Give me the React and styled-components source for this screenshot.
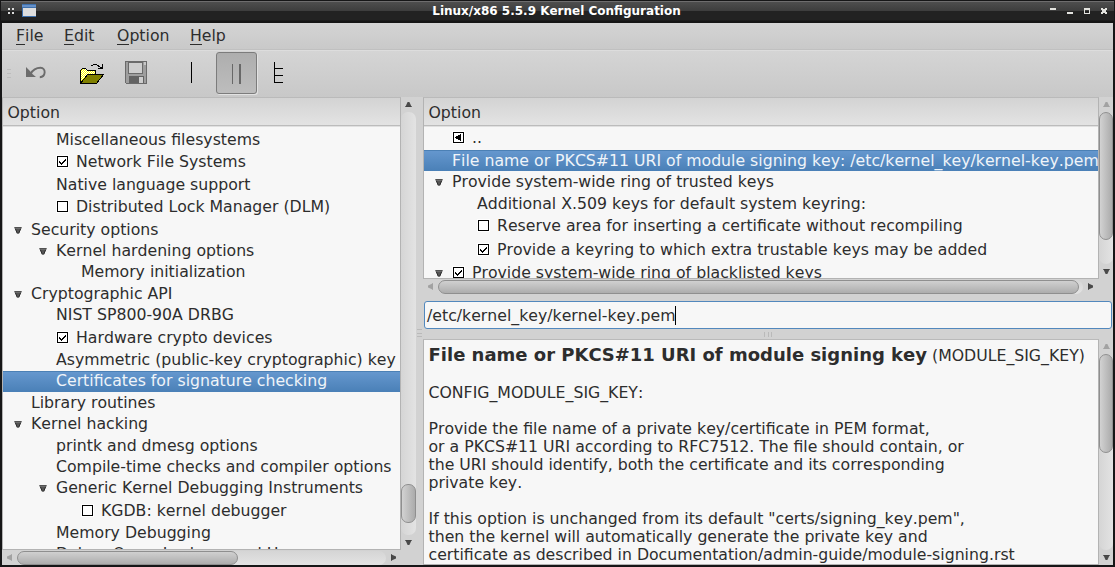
import React from "react";
import styled, { createGlobalStyle } from "styled-components";

const GlobalStyle = createGlobalStyle`
  * { box-sizing: border-box; }
  body {
    margin: 0;
    overflow: hidden;
    font-family: "DejaVu Sans", sans-serif;
    font-size: 15.72px;
    font-kerning: none;
    color: #2d2d2d;
  }
`;

const Window = styled.div`
  width: 1115px;
  height: 567px;
  background: #161617;
  display: flex;
  flex-direction: column;
  padding: 1px 2px 2px;
`;

const TitleBar = styled.header`
  height: 22px;
  display: grid;
  grid-template-columns: 1fr auto 1fr;
  align-items: start;
  border-top: 1px solid #6e6d6e;
  margin: 0 -1px;
  background: linear-gradient(#4e4e4e 0, #3d3d3d 9px, #222 9px, #222 18px, #151515 19px);
`;

const TitleSide = styled.div`
  display: flex;
  justify-content: ${(p) => (p.$end ? "flex-end" : "flex-start")};
`;

const Title = styled.h1`
  margin: 0 2px 0 0;
  font-size: 12px;
  line-height: 18px;
  font-weight: bold;
  color: #fff;
  white-space: pre;
`;

const Body = styled.main`
  flex: 1;
  min-height: 0;
  display: flex;
  flex-direction: column;
  background: #d2d2d2;
`;

const MenuBar = styled.nav`
  height: 26px;
  display: flex;
  gap: 22px;
  padding: 0 14px;
  line-height: 26px;
  background: linear-gradient(#d4d4d4, #c9c9c9);
`;

const MenuItem = styled.span`
  width: ${(p) => p.$w}px;
  white-space: pre;
`;

const Mnemonic = styled.span`
  display: inline-block;
  height: 18px;
  line-height: 18px;
  border-bottom: 1px solid #2d2d2d;
`;

const ToolBar = styled.div`
  height: 48px;
  display: flex;
  border-top: 1px solid #c0c0c0;
  box-shadow: inset 0 1px #dddddd;
  background: linear-gradient(#d5d5d5, #c8c8c8);
`;

const Split = styled.div`
  flex: 1;
  min-height: 0;
  display: flex;
`;

const LeftPane = styled.section`
  width: 414px;
  display: flex;
  flex-direction: column;
`;

const RightPane = styled.section`
  width: 690px;
  display: flex;
  flex-direction: column;
`;

const VSplitter = styled.div`
  width: 7px;
  display: flex;
  align-items: center;
  padding-top: 4px;
`;

const HSplitter = styled.div`
  height: 8px;
  display: flex;
  justify-content: center;
`;

const ScrollArea = styled.div`
  display: flex;
  min-height: 0;
  height: ${(p) => p.$h}px;
`;

const View = styled.div`
  flex: 1;
  min-width: 0;
  overflow: hidden;
  background: #f7f7f7;
  border: 1px solid #b3b3b3;
  border-top-color: #bababa;
`;

const ColumnHeader = styled.div`
  height: 28px;
  padding: 2px 0 0 4.5px;
  line-height: 26px;
  border-bottom: 1px solid #bcbcbc;
  box-shadow: 0 1px #e0e0e0;
  background: linear-gradient(#d3d3d3, #e3e3e3);
`;

const Tree = styled.div`
  padding-top: ${(p) => p.$top}px;
`;

const Row = styled.div`
  height: ${(p) => p.$h}px;
  display: flex;
  align-items: center;
  white-space: pre;
  padding-left: ${(p) => 10 + p.$level * 25}px;
  color: ${(p) => (p.$selected ? "#eff4f9" : "inherit")};
  background: ${(p) => (p.$selected ? "linear-gradient(#6698cf, #4a80b7)" : "none")};
  box-shadow: ${(p) => (p.$selected ? "inset 0 1px #4b80b5" : "none")};
`;

const Label = styled.span`
  align-self: flex-start;
  line-height: ${(p) => p.$lh}px;
`;

const ArrowSlot = styled.span`
  width: 18px;
  flex: none;
  display: flex;
  padding-left: 1px;
`;

const BoxSlot = styled.span`
  width: 20px;
  flex: none;
  display: flex;
  padding-bottom: 2px;
`;

const VBar = styled.div`
  width: ${(p) => p.$w}px;
  display: flex;
  flex-direction: column;
`;

const HBar = styled.div`
  height: 15px;
  display: flex;
  align-items: center;
`;

const Btn = styled.div`
  width: 15px;
  height: 15px;
  flex: none;
  display: flex;
  align-items: center;
  justify-content: center;
`;

const VTrough = styled.div`
  flex: 1;
  border-radius: 7px;
  background: linear-gradient(90deg, #d5d5d5, #e3e3e3);
  padding-top: ${(p) => p.$offset}px;
`;

const HTrough = styled.div`
  flex: 1;
  height: 14px;
  border-radius: 7px;
  background: linear-gradient(#d5d5d5, #e3e3e3);
`;

const VThumb = styled.div`
  height: ${(p) => p.$len}px;
  border: 1px solid #8f8f8f;
  border-radius: 7px;
  background: linear-gradient(90deg, #d2d2d2, #ababab);
`;

const HThumb = styled.div`
  width: ${(p) => p.$len}px;
  height: 14px;
  border: 1px solid #8f8f8f;
  border-radius: 7px;
  background: linear-gradient(#d0d0d0, #adadad);
`;

const ValueInput = styled.div`
  height: 28px;
  margin: 7px 1px 2px 1px;
  padding: 1px 0 0 2px;
  line-height: 25px;
  display: flex;
  align-items: center;
  white-space: pre;
  background: #f7f7f7;
  border: 1px solid #5288bd;
  border-radius: 3px;
`;

const Caret = styled.span`
  width: 1px;
  height: 19px;
  background: #000;
`;

const HelpText = styled.div`
  padding: 3px 4.5px 0;
  line-height: 18px;
  white-space: pre;
`;

const HelpTitle = styled.h2`
  margin: 0 0 16px;
  font-size: 15.72px;
  font-weight: normal;
  line-height: 24px;
  b { font-size: 18px; }
`;

const Icon = styled.svg`
  flex: none;
  display: block;
`;

const ToolIcon = styled(Icon)`
  margin-left: ${(p) => p.$ml}px;
`;

const ToggleButton = styled.div`
  width: 41px;
  height: 42px;
  margin: 2px 0 0 21px;
  border: 1px solid #7c7c7c;
  border-radius: 3px;
  background: linear-gradient(#aeaeae, #bdbdbd);
  box-shadow: 1px 1px #e2e2e2;
  display: flex;
`;

function Arrow({ dir, dim }) {
  const rot = { down: 0, up: 180, left: 90, right: 270 }[dir];
  return (
    <Icon width="7" height="7" viewBox="0 0 7 7">
      <g transform={`rotate(${rot} 3.5 3.5)`}>
        <path d="M0.6 1.5H6.4L4.4 6H2.6Z" fill={dim ? "#a2a2a2" : "#4a4a4a"} />
        <path d="M0.3 1.5H6.7" stroke={dim ? "#a2a2a2" : "#444"} />
      </g>
    </Icon>
  );
}

function Expander() {
  return (
    <Icon width="8" height="7" viewBox="0 0 8 7">
      <path d="M1 1.2H7L5 6.5H3Z" fill="#555" />
      <path d="M0.3 0.7H7.7M1.2 1.5L3.3 6.4M6.8 1.5L4.7 6.4" stroke="#2c2c2c" fill="none" />
    </Icon>
  );
}

function Box({ kind }) {
  return (
    <Icon width="13" height="13" viewBox="0 0 13 13" shapeRendering="crispEdges">
      <path d="M0 0H13V13H0Z" fill="#fff" />
      <path d="M1.5 1.5H11.5V11.5H1.5Z" fill="#fff" stroke="#000" />
      {kind === "on" && (
        <path
          d="M3 6h1v2h-1zM4 7h1v2h-1zM5 8h1v2h-1zM6 7h1v2h-1zM7 6h1v2h-1zM8 5h1v2h-1zM9 4h1v2h-1z"
          fill="#000"
        />
      )}
      {kind === "back" && <path d="M3 6h1v1h-1zM4 5h2v3h-2zM6 4h2v5h-2zM8 3h1v7h-1z" fill="#000" />}
    </Icon>
  );
}

function TreeRow({ item, lowerSelected }) {
  const [h, level, arrow, box, text, selected] = item;
  const lineHeight = selected && lowerSelected ? h + 1 : h - (h % 2);
  return (
    <Row $h={h} $level={level} $selected={selected}>
      <ArrowSlot>{arrow ? <Expander /> : null}</ArrowSlot>
      {box ? (
        <BoxSlot>
          <Box kind={box} />
        </BoxSlot>
      ) : null}
      <Label $lh={lineHeight}>{text}</Label>
    </Row>
  );
}

function VScroll({ offset, len, dimUp, width = 14 }) {
  return (
    <VBar $w={width}>
      <Btn><Arrow dir="up" dim={dimUp} /></Btn>
      <VTrough $offset={offset}><VThumb $len={len} /></VTrough>
      <Btn><Arrow dir="down" /></Btn>
    </VBar>
  );
}

function HScroll({ len, children }) {
  return (
    <HBar>
      <Btn><Arrow dir="left" dim /></Btn>
      <HTrough><HThumb $len={len} /></HTrough>
      <Btn><Arrow dir="right" /></Btn>
      {children}
    </HBar>
  );
}

const leftRows = [
  [22, 1, 0, null, "Miscellaneous filesystems"],
  [23, 1, 0, "on", "Network File Systems"],
  [22, 1, 0, null, "Native language support"],
  [23, 1, 0, "off", "Distributed Lock Manager (DLM)"],
  [22, 0, 1, null, "Security options"],
  [21, 1, 1, null, "Kernel hardening options"],
  [21, 2, 0, null, "Memory initialization"],
  [22, 0, 1, null, "Cryptographic API"],
  [21, 1, 0, null, "NIST SP800-90A DRBG"],
  [24, 1, 0, "on", "Hardware crypto devices"],
  [21, 1, 0, null, "Asymmetric (public-key cryptographic) key"],
  [21, 1, 0, null, "Certificates for signature checking", true],
  [22, 0, 0, null, "Library routines"],
  [21, 0, 1, null, "Kernel hacking"],
  [22, 1, 0, null, "printk and dmesg options"],
  [21, 1, 0, null, "Compile-time checks and compiler options"],
  [21, 1, 1, null, "Generic Kernel Debugging Instruments"],
  [24, 2, 0, "off", "KGDB: kernel debugger"],
  [21, 1, 0, null, "Memory Debugging"],
  [21, 1, 0, null, "Debug Oops, Lockups and Hangs"],
];

const rightRows = [
  [23, 0, 0, "back", ".."],
  [21, 0, 0, null, "File name or PKCS#11 URI of module signing key: /etc/kernel_key/kernel-key.pem", true],
  [22, 0, 1, null, "Provide system-wide ring of trusted keys"],
  [22, 1, 0, null, "Additional X.509 keys for default system keyring:"],
  [23, 1, 0, "off", "Reserve area for inserting a certificate without recompiling"],
  [24, 1, 0, "on", "Provide a keyring to which extra trustable keys may be added"],
  [22, 0, 1, "on", "Provide system-wide ring of blacklisted keys"],
];

const helpBody = `CONFIG_MODULE_SIG_KEY:

Provide the file name of a private key/certificate in PEM format,
or a PKCS#11 URI according to RFC7512. The file should contain, or
the URI should identify, both the certificate and its corresponding
private key.

If this option is unchanged from its default "certs/signing_key.pem",
then the kernel will automatically generate the private key and
certificate as described in Documentation/admin-guide/module-signing.rst`;

const menus = [["F", "ile", 26], ["E", "dit", 31], ["O", "ption", 51], ["H", "elp", 36]];

export default function App() {
  return (
    <>
      <GlobalStyle />
      <Window>
        <TitleBar>
          <TitleSide>
            <Icon width="40" height="20" shapeRendering="crispEdges">
              <path d="M7 6h2v2h-2zM11 6h2v2h-2zM7 10h2v2h-2zM11 10h2v2h-2z" fill="#ddd" />
              <path d="M21 2h14v13h-14z" fill="#3e70ad" />
              <path d="M21 3h14v2h-14z" fill="#6590c8" />
              <path d="M22 6h13v8h-13z" fill="#dedede" />
            </Icon>
          </TitleSide>
          <Title>Linux/x86 5.5.9 Kernel Configuration</Title>
          <TitleSide $end>
            <Icon width="66" height="20" shapeRendering="crispEdges">
              <g fill="#e2e2de">
                <path d="M2 6h6v2h-6zM19 10h6v2h-6z" />
                <path fillRule="evenodd" d="M36 6h6v6h-6zM37 8v3h4v-3z" />
                <path d="M53 6h2v1h2v-1h2v2h-1v2h1v2h-2v-1h-2v1h-2v-2h1v-2h-1z" />
              </g>
            </Icon>
          </TitleSide>
        </TitleBar>
        <Body>
          <MenuBar>
            {menus.map(([m, rest, w]) => (
              <MenuItem key={m} $w={w}><Mnemonic>{m}</Mnemonic>{rest}</MenuItem>
            ))}
          </MenuBar>
          <ToolBar>
            <ToolIcon $ml={5} width="4" height="47" shapeRendering="crispEdges">
              <path d="M0 19.5h4M0 23.5h4M0 27.5h4" stroke="#bdbdbd" />
            </ToolIcon>
            <ToolIcon $ml={13} width="24" height="47">
              <path d="M2 17V27H12L8.7 24.2L5.5 20.5Z" fill="#6c6c6c" />
              <path d="M6.5 24C9 19.5 12.5 17.8 16.5 17.8C22.5 17.8 21.8 27 15.8 27.2" fill="none" stroke="#6c6c6c" strokeWidth="1.9" />
            </ToolIcon>
            <ToolIcon $ml={30} width="26" height="47" shapeRendering="crispEdges">
              <defs>
                <pattern id="dither" width="2" height="2" patternUnits="userSpaceOnUse">
                  <path d="M0 0h2v2h-2z" fill="#ffff00" />
                  <path d="M0 0h1v1h-1zM1 1h1v1h-1z" fill="#fff" />
                </pattern>
              </defs>
              <path d="M2.5 33.5V20.5L4.5 18.5H7.5L9.5 20.5H17.5V24.5H10.5L2.5 33.5Z" fill="url(#dither)" stroke="#000" />
              <path d="M2.5 33.5L9.5 24.5H25.5L18.5 33.5Z" fill="#808000" stroke="#000" />
              <path d="M13 15.5h2M15 14.5h4M19 15.5h2M20 16.5h2M24.5 14v5M20 18.5h5M22 17.5h3" stroke="#000" />
            </ToolIcon>
            <ToolIcon $ml={20} width="24" height="47" shapeRendering="crispEdges">
              <path d="M1.5 11.5h21v22h-20l-1-1z" fill="#9e9e9e" stroke="#6b6b6b" />
              <path d="M4.5 12h14v11h-14z" fill="#cecece" stroke="#6b6b6b" />
              <path d="M20 12h2v3h-2z" fill="#c8c8c8" />
              <path d="M5 26h15v7h-15z" fill="#636363" />
              <path d="M15 27h4v6h-4z" fill="#cecece" />
            </ToolIcon>
            <ToolIcon $ml={41} width="6" height="47" shapeRendering="crispEdges">
              <path d="M2.5 12v21" stroke="#000" />
            </ToolIcon>
            <ToggleButton>
              <Icon width="39" height="40" shapeRendering="crispEdges">
                <path d="M15.5 11v20" stroke="#686868" />
                <path d="M23 11v20" stroke="#686868" strokeWidth="2" />
              </Icon>
            </ToggleButton>
            <ToolIcon $ml={16} width="14" height="47" shapeRendering="crispEdges">
              <path d="M1.5 12v21M1 18.5h9M1 25.5h9M1 32.5h9" stroke="#000" />
            </ToolIcon>
          </ToolBar>
          <Split>
            <LeftPane>
              <ScrollArea $h={453}>
                <View>
                  <ColumnHeader>Option</ColumnHeader>
                  <Tree $top={3}>
                    {leftRows.map((r) => <TreeRow key={r[4]} item={r} />)}
                  </Tree>
                </View>
                <VScroll offset={372} len={39} width={15} />
              </ScrollArea>
              <HScroll len={221}><Btn /></HScroll>
            </LeftPane>
            <VSplitter>
              <Icon width="6" height="9" shapeRendering="crispEdges">
                <path d="M1 0.5h5M1 4.5h5M1 7.5h5" stroke="#bababa" />
              </Icon>
            </VSplitter>
            <RightPane>
              <ScrollArea $h={183}>
                <View>
                  <ColumnHeader>Option</ColumnHeader>
                  <Tree $top={1}>
                    {rightRows.map((r) => <TreeRow key={r[4]} item={r} lowerSelected />)}
                  </Tree>
                </View>
                <VScroll offset={0} len={128} dimUp />
              </ScrollArea>
              <HScroll len={641}><Btn /></HScroll>
              <ValueInput>/etc/kernel_key/kernel-key.pem<Caret /></ValueInput>
              <HSplitter>
                <Icon width="9" height="6" shapeRendering="crispEdges">
                  <path d="M0.5 1v5M4.5 1v5M7.5 1v5" stroke="#bababa" />
                </Icon>
              </HSplitter>
              <ScrollArea $h={227}>
                <View>
                  <HelpText>
                    <HelpTitle><b>File name or PKCS#11 URI of module signing key</b> (MODULE_SIG_KEY)</HelpTitle>
                    {helpBody}
                  </HelpText>
                </View>
                <VScroll offset={0} len={99} dimUp />
              </ScrollArea>
            </RightPane>
          </Split>
        </Body>
      </Window>
    </>
  );
}
